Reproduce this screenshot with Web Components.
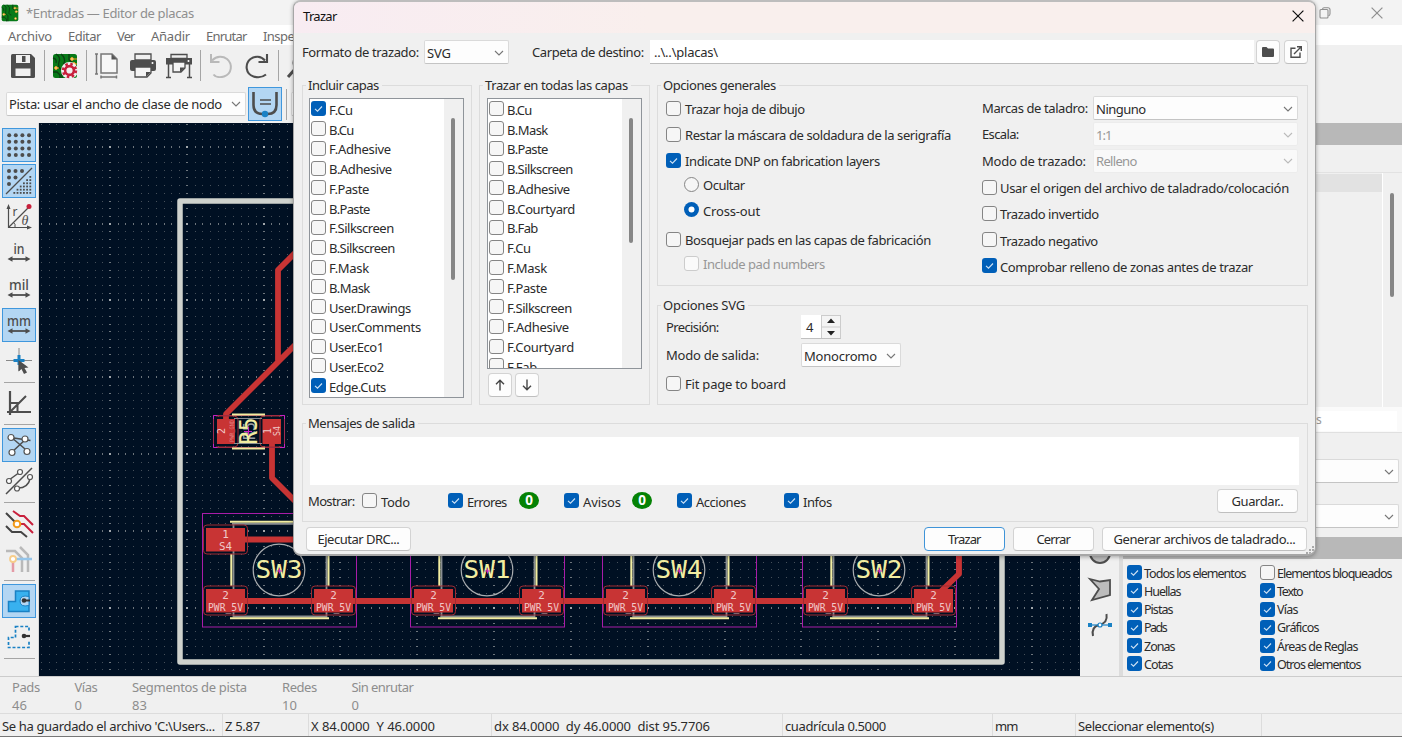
<!DOCTYPE html>
<html lang="es">
<head>
<meta charset="utf-8">
<title>Editor de placas</title>
<style>
html,body{margin:0;height:100%;overflow:hidden}
body{font:13px/16px "Noto Sans","Open Sans",sans-serif;color:#2b2b2b;background:#f0f0f0}
</style>
</head>
<body>
<pcb-app></pcb-app>
<script>
const pending = [];
const define = (name, css, html, setup) => customElements.define(name, class extends HTMLElement {
  constructor(){ super(); this.attachShadow({mode:'open'}); }
  connectedCallback(){
    if (this.ready) return; this.ready = true;
    const body = typeof html === 'function' ? html(this) : html;
    this.shadowRoot.innerHTML = `<style>*{box-sizing:border-box}${css}</style>${body}`;
    if (setup) setup(this, this.shadowRoot);
  }
});
const at = (el, n, d='') => el.hasAttribute(n) ? el.getAttribute(n) : d;

/* A text run tracked to a given advance width */
define('x-text', ':host{display:inline-block;white-space:pre;flex:none}span{white-space:pre}',
  '<span><slot></slot></span>', (el) => { if (at(el,'w')) { el.style.width = at(el,'w')+'px'; pending.push(el); } });
function fitTexts(){
  for (const el of pending){
    const s = el.shadowRoot.querySelector('span');
    const n = el.textContent.length;
    const m = s.getBoundingClientRect().width;
    if (n > 1) s.style.letterSpacing = ((+at(el,'w') - m) / (n - .5)).toFixed(3) + 'px';
  }
}
const T = (t, w) => `<x-text w="${w}">${t}</x-text>`;

/* ---------- icons ---------- */
const D = '#4d4d4d';
const board = `<rect x="1" y="1" width="24" height="24" rx="2.5" fill="#077a18"/><path d="M4 1q5 3 3 8t3 8v8M9 1q5 4 3 9t3 6M1 19h4l3 3v3M1 5q4 1 3 5M17 1v6l3 2" fill="none" stroke="#0a3f12" stroke-width="1.3"/><path d="M21 6h4M21 11h4M3 15h4" stroke="#f0a020" stroke-width="1"/><g fill="#f8e7b0" stroke="#f29b1d"><circle cx="20" cy="6" r="1.4"/><circle cx="22" cy="11" r="1.4"/><circle cx="4" cy="15" r="1.4"/><circle cx="21" cy="21" r="1.4"/></g>`;
const arrows = `<path d="M3 18h18" stroke="${D}" stroke-width="1.8"/><path d="M0.5 18l5-2.7v5.4zM23.5 18l-5-2.7v5.4z" fill="${D}"/>`;
const unit = (t,w) => `<text x="12" y="12.5" text-anchor="middle" textLength="${w}" lengthAdjust="spacingAndGlyphs" font-family="Noto Sans" font-size="14.5" font-weight="500" fill="${D}">${t}</text>${arrows}`;
let dots='', fine='';
for(let r=0;r<4;r++)for(let c=0;c<4;c++)dots+=`<circle cx="${2.2+c*6.6}" cy="${2.2+r*6.6}" r="2"/>`;
for(let r=0;r<6;r++)for(let c=0;c<8;c++)if(c+r>=7)fine+=`<rect x="${1+c*3.2}" y="${8+r*3.2}" width="1.8" height="1.8"/>`;
const ICONS = {
  board:[26,board],
  save:[24,`<path d="M0 1.5Q0 0 1.5 0H20l4 4v18.500q0 1.500-1.500 1.500h-21Q0 24 0 22.500z" fill="${D}"/><path d="M5 1h14v8H5z" fill="#f0f0f0"/><path d="M11 2h3.500v6H11z" fill="${D}"/><path d="M4.500 14.500h15V22h-15z" fill="#f0f0f0"/>`],
  setup:[26,board+`<circle cx="17.500" cy="17.500" r="8.500" fill="#f0f0f0"/><g stroke="#c8203c" fill="none"><circle cx="17.500" cy="17.500" r="4.400" stroke-width="2.600"/><circle cx="17.500" cy="17.500" r="6.400" stroke-width="2.600" stroke-dasharray="2.500 2.530"/></g>`],
  page:[26,`<g fill="none" stroke="#777" stroke-width="1.500"><path d="M7 1h11l5 5v14H7z" fill="#f7f7f7"/><path d="M2.500 1v20M1 1h3M1 21h3M7 24h15M7 22.500v3M22.500 22.500v3"/></g><path d="M17.500 1v5.500H23" fill="#555"/>`],
  print:[26,`<path d="M5 1h16v6H5z" fill="none" stroke="${D}" stroke-width="1.300"/><path d="M2 7h22q2 0 2 2v7q0 2-2 2H2q-2 0-2-2V9q0-2 2-2z" fill="${D}"/><circle cx="22.500" cy="10" r="1" fill="#fff"/><path d="M5 14h16v6l-4 4H5z" fill="#f4f4f4" stroke="${D}" stroke-width="1.300"/><path d="M21 19h-5v5z" fill="${D}"/>`],
  plot:[26,`<path d="M5 1.500h16v4H5z" fill="#f0f0f0" stroke="${D}" stroke-width="1.300"/><path d="M0 5h26v6.500H0z" fill="${D}"/><circle cx="22.500" cy="8" r="1" fill="#fff"/><path d="M2.500 11v13M23.500 11v13M0 24.500h5M21 24.500h5" stroke="${D}" stroke-width="1.500"/><path d="M7 9h12v6l-4 4H7z" fill="#f4f4f4" stroke="${D}" stroke-width="1.300"/><path d="M19 14.500h-5v5z" fill="${D}"/>`],
  undo:[24,`<path d="M3 6.500C8 1.500 14 2 18 5c6 5 5 15-3 17.500-5 1.500-9 0-10.500-2" fill="none" stroke="#b9b9b9" stroke-width="2"/><path d="M2 0v8h8.500" fill="none" stroke="#b9b9b9" stroke-width="2"/>`],
  redo:[24,`<path d="M20 6.500C16 1.500 9.500 2 5.500 5c-6 5-5 15 3 17.500 5 1.500 10 0 12.500-2" fill="none" stroke="${D}" stroke-width="2.100"/><path d="M22 0v8h-8.500" fill="none" stroke="${D}" stroke-width="2.100"/>`],
  find:[24,`<circle cx="14" cy="9" r="7.500" fill="none" stroke="${D}" stroke-width="2"/><path d="M8.500 14.500L1 23" stroke="${D}" stroke-width="3"/>`],
  auto:[26,`<path d="M1.500 1v13q0 9 9 9h5q9 0 9-9V1" fill="none" stroke="${D}" stroke-width="2.600"/><path d="M8 9h11M8 13h11" stroke="${D}" stroke-width="1.500"/><circle cx="13" cy="23" r="3.200" fill="#1a81c4"/>`],
  grid:[24,`<g fill="${D}">${dots}</g>`],
  gridover:[26,`<g fill="${D}"><circle cx="3" cy="3" r="2"/><circle cx="9.500" cy="3" r="2"/><circle cx="16" cy="3" r="2"/><circle cx="3" cy="9.500" r="2"/><circle cx="9.500" cy="9.500" r="2"/><circle cx="3" cy="16" r="2"/>${fine}</g><path d="M0 26L26 0" stroke="${D}" stroke-width="1.300"/>`],
  polar:[26,`<path d="M2.500 3v20.500H22M2.500 23.500L22 4" fill="none" stroke="${D}" stroke-width="1.200"/><path d="M2.500 0L4.500 5h-4zM26 23.500l-5 2v-4z" fill="${D}"/><circle cx="23" cy="2.500" r="2.500" fill="#c8203c"/><path d="M7 18q3 2 2 5" fill="none" stroke="${D}"/><text x="6.500" y="12" font-family="Noto Sans" font-size="12" fill="${D}">r</text><text x="15.500" y="20.500" font-family="Liberation Serif" font-style="italic" font-size="14" fill="${D}">θ</text>`],
  inch:[24,unit('in',11)], mil:[24,unit('mil',20)], mm:[24,unit('mm',24)],
  cursor:[26,`<path d="M0 12.500h26M13 0v23" stroke="#888" stroke-width="1"/><path d="M7.500 12.500h11M13 7v10" stroke="#1a81c4" stroke-width="3"/><path d="M12.500 12v11.500l3-2.500 2.500 5 3-1.500-2.500-4.500 4-.5z" fill="${D}"/>`],
  angle:[26,`<path d="M4 1v24M1 22h24" stroke="${D}" stroke-width="2.200"/><path d="M5 21L20 6M4 13h7.500v8" fill="none" stroke="${D}" stroke-width="2"/>`],
  rats:[26,`<path d="M4.500 5.500l20 3M20 7L5.500 20.500M5 5l17 14.500" stroke="${D}" stroke-width="1.500"/><g fill="#fff" stroke="#555" stroke-width="1.200"><circle cx="5" cy="5.500" r="3"/><circle cx="19" cy="7" r="3"/><circle cx="6" cy="20.500" r="3"/><circle cx="21" cy="19.500" r="3"/></g>`],
  curve:[26,`<path d="M0 26L26 0M3 12L14 4M12 20q10 0 12-9" fill="none" stroke="${D}" stroke-width="1.500"/><g fill="#fff" stroke="#555" stroke-width="1.200"><circle cx="3" cy="13" r="2.500"/><circle cx="14" cy="4" r="2.500"/><circle cx="11" cy="20.500" r="2.500"/><circle cx="24" cy="9" r="2.500"/></g>`],
  net:[28,`<g fill="none" stroke-width="2"><path d="M1 4l9 9M1 17l6 6h9l6 5" stroke="#444"/><path d="M8 2l7 5h4l9 9M13 15h6l9 9" stroke="#c8203c"/></g><circle cx="12" cy="15" r="3.300" fill="#fff" stroke="#f29b1d" stroke-width="2"/>`],
  via:[26,`<g fill="none" stroke-width="2.500"><path d="M0 5h9l7 7v14M14 1l8 8v17" stroke="#b9b9b9"/><path d="M7 16v10" stroke="#e49aa6"/><path d="M9 13h17" stroke="#95c5ea"/></g><circle cx="7" cy="13" r="3" fill="#fff" stroke="#f6cd8b" stroke-width="1.800"/>`],
  zone:[24,`<path d="M8.500 2H22v20.500H1.500V12.500h7z" fill="#38b1ef" stroke="#1a81c4" stroke-width="1.500"/><path d="M22 7.500q-9-2-9 4.500t9 4.500z" fill="#b3d6f3" stroke="#1a81c4"/><circle cx="17" cy="11.500" r="2.300" fill="#333"/><path d="M17 11.500h6" stroke="#333" stroke-width="2"/>`],
  zoneline:[24,`<path d="M8.500 1.500H22v21H1.500V12.500h7z" fill="none" stroke="#1a81c4" stroke-width="1.700" stroke-dasharray="3 1.800"/><path d="M20 6.500h4v9h-4z" fill="#f0f0f0"/><circle cx="17" cy="11" r="2.300" fill="#333"/><path d="M17 11h6" stroke="#333" stroke-width="2.200"/>`],
  circle:[26,`<circle cx="13" cy="13" r="10" fill="#bcbcbc" stroke="${D}" stroke-width="2"/>`],
  poly:[24,`<path d="M2 2l10 2.500 10-1.500v15L4 23l7-11z" fill="#bcbcbc" stroke="${D}" stroke-width="1.800"/>`],
  bezier:[24,`<path d="M5 23q-2-9 6-11 9-2 7.500-11" fill="none" stroke="${D}" stroke-width="2"/><path d="M2 12h20" stroke="#1a81c4" stroke-width="1.200"/><path d="M0 10h4v4H0zM20 10h4v4h-4z" fill="#1a81c4"/><circle cx="12" cy="12" r="2" fill="#fff" stroke="#1a81c4" stroke-width="1.200"/>`],
  close:[12,`<path d="M.6.6l10.800 10.800M11.400.6L.6 11.400" stroke="currentColor" stroke-width="1.200"/>`],
  restore:[12,`<path d="M1 3.500q0-1 1-1h6q1 0 1 1V10q0 1-1 1H2q-1 0-1-1zM3.500 2.200Q3.800.8 5 .8h4q2 0 2 2v4q0 1.500-1.200 1.900" fill="none" stroke="currentColor" stroke-width="1.100"/>`],
  chev:[10,`<path d="M1 3l4 4 4-4" fill="none" stroke="currentColor" stroke-width="1.100"/>`],
  folder:[12,`<path d="M0 2q0-1 1-1h3.500L6 2.500h5q1 0 1 1V10q0 1-1 1H1q-1 0-1-1z" fill="${D}"/>`],
  open:[12,`<path d="M5.500 2.200H1v9h9V6.500" fill="none" stroke="${D}" stroke-width="1.400"/><path d="M4 8l7-7M7 .8h4.300V5" fill="none" stroke="${D}" stroke-width="1.400"/>`],
  up:[12,`<path d="M6 1v10.500M2 5.200l4-4 4 4" fill="none" stroke="#444" stroke-width="1.400"/>`],
  down:[12,`<path d="M6 .5V11M2 6.800l4 4 4-4" fill="none" stroke="#444" stroke-width="1.400"/>`]
};
define('x-icon', ':host{display:block;flex:none}svg{display:block;overflow:visible}', el => {
  const [v,s] = ICONS[at(el,'name')], z = at(el,'size') || v;
  return `<svg width="${z}" height="${z}" viewBox="0 0 ${v} ${v}">${s}</svg>`;
});
const I = (n,s) => `<x-icon name="${n}"${s?` size="${s}"`:''}></x-icon>`;

/* ---------- controls ---------- */
define('tool-button', `:host{display:flex;width:36px;height:36px;flex:none;align-items:center;justify-content:center}
 div{width:34px;height:34px;display:flex;align-items:center;justify-content:center}
 :host([on]) div{background:#b3d6f3;border:1px solid #3f97dd}`, el => `<div>${I(at(el,'name'),at(el,'size'))}</div>`);
define('ui-check', `:host{display:flex;align-items:center;flex:none;height:18px}
 i{width:15px;height:15px;border:1px solid #858585;border-radius:3px;background:#f6f6f6;flex:none;margin-right:var(--gap,4px)}
 svg{width:15px;height:15px;flex:none;margin-right:var(--gap,4px)}
 :host([disabled]){color:#979797}:host([disabled]) i{border-color:#ccc;background:#fafafa}
 x-text{position:relative;top:1px}
 :host([radio]) i{border-radius:50%}`, el => {
  let b = '<i></i>';
  if (el.hasAttribute('checked')) b = el.hasAttribute('radio')
    ? '<svg viewBox="0 0 15 15"><circle cx="7.500" cy="7.500" r="7.500" fill="#005fb8"/><circle cx="7.500" cy="7.500" r="3" fill="#fff"/></svg>'
    : '<svg viewBox="0 0 15 15"><rect width="15" height="15" rx="3" fill="#005fb8"/><path d="M4 7.800l2.500 2.400L11 5.500" fill="none" stroke="#cfe3f5" stroke-width="1.100"/></svg>';
  return b + T(at(el,'label'), at(el,'w'));
});
const C = (l,w,x='') => `<ui-check label="${l}" w="${w}" ${x}></ui-check>`;
define('ui-combo', `:host{display:flex;align-items:center;justify-content:space-between;height:24px;background:#fdfdfd;border:1px solid #dadada;border-bottom-color:#c4c4c4;border-radius:2px;padding:1px 4px 0 2px;flex:none;box-sizing:border-box}
 x-icon{color:#777}:host([disabled]){color:#979797;background:#f9f9f9;border-color:#ececec}:host([disabled]) x-icon{color:#bbb}`,
 el => (at(el,'label') ? T(at(el,'label'),at(el,'w')) : '<span></span>') + I('chev'));
define('ui-button', `:host{display:flex;align-items:center;justify-content:center;height:24px;background:#fdfdfd;border:1px solid #d3d3d3;border-bottom-color:#bfbfbf;border-radius:4px;flex:none;box-sizing:border-box}
 :host([primary]){border-color:#3f94d8}`, '<slot></slot>');
define('ui-group', `:host{display:block;position:relative;border:1px solid #dcdcdc;box-sizing:border-box;flex:none}
 .legend{position:absolute;left:3px;top:-9px;padding:0 3px 0 2px;background:#f0f0f0}`,
 el => `<div class="legend">${T(at(el,'label'),at(el,'w'))}</div><slot></slot>`);
define('layer-list', `:host{display:block;border:1px solid #8f949a;background:#fff;box-sizing:border-box;overflow:hidden}
 .in{display:flex;height:100%}.rows{flex:1;overflow:hidden}.rows ui-check{height:19.77px;margin-left:1px;--gap:3px}
 .bar{width:19px;background:#f0f0f0;padding:19px 0 0 7px}.bar i{display:block;width:4px;border-radius:2px;background:#868686}`,
 el => `<div class="in"><div class="rows">${JSON.parse(at(el,'items')).map(([l,w,c])=>C(l,w,c?'checked':'')).join('')}</div><div class="bar"><i style="height:${at(el,'thumb')}px"></i></div></div>`);
define('count-badge', `:host{display:flex;width:20px;height:17px;border-radius:50%;background:#058205;color:#fff;font:bold 13.5px/17px "Noto Sans",sans-serif;align-items:center;justify-content:center;flex:none}`, '<slot></slot>');

/* ---------- dialog ---------- */
const L1 = [['F.Cu',24,1],['B.Cu',25],['F.Adhesive',62],['B.Adhesive',63],['F.Paste',40],['B.Paste',41],['F.Silkscreen',65],['B.Silkscreen',66],['F.Mask',40],['B.Mask',41],['User.Drawings',82],['User.Comments',92],['User.Eco1',55],['User.Eco2',55],['Edge.Cuts',57,1]];
const L2 = [['B.Cu',25],['B.Mask',41],['B.Paste',41],['B.Silkscreen',66],['B.Adhesive',63],['B.Courtyard',68],['B.Fab',31],['F.Cu',24],['F.Mask',40],['F.Paste',40],['F.Silkscreen',65],['F.Adhesive',62],['F.Courtyard',67],['F.Fab',30]];
define('plot-dialog', `:host{position:absolute;left:293px;top:0;width:1023px;height:556px;display:flex;flex-direction:column;background:#f0f0f0;border:1px solid #a6a6a6;border-top:2px solid #bdbdbd;border-bottom-width:2px;border-radius:8px;box-sizing:border-box;overflow:hidden;box-shadow:0 1px 4px #0005}
 .title{height:31px;flex:none;background:linear-gradient(90deg,#f8ecf2,#f9efed 35%);display:flex;align-items:center;justify-content:space-between;padding:0 11px 3px 9px;color:#111}
 .path{height:48px;display:flex;align-items:center;flex:none;padding:0 0 10px 8px}
 .path ui-combo{width:85px;margin:0 23px 0 5px}
 .field{width:604px;height:24px;background:#fff;border-bottom:1.500px solid #bcbcbc;margin:0 2px 0 6px;padding:4px;flex:none}
 .path ui-button{width:24px}.path ui-button+ui-button{margin-left:4px}
 .main{display:flex;height:320px;margin:4px 0 0 8px;flex:none;gap:7px}
 .main>ui-group{height:320px}
 .g1{width:170px;padding:12px 0 0 6px}.g2{width:171px;padding:12px 0 0 7px}
 layer-list{width:155px}
 .g1 layer-list{height:300px}.g2 layer-list{height:271px}
 .mv{display:flex;gap:3px;margin:4px 0 0 1px}.mv ui-button{width:24px}
 .right{width:651px;display:flex;flex-direction:column;justify-content:space-between}
 .gen{height:199px;display:flex}.gen>div{padding-top:9px}
 .left{width:316px;padding-left:8px}.left ui-check{height:26px}
 .left .r1{height:22px;margin-left:18px}.left .r2{height:29px;margin-left:18px}.left .p{height:30px}.left .ip{height:18px;margin-left:18px}
 .opts{padding-left:8px;display:flex;flex-direction:column}.opts>*{height:26.300px;flex:none}
 .opts ui-check{--gap:3px}
 .kv{display:flex;align-items:center;justify-content:space-between;width:316px}.kv ui-combo{width:205px}
 .svg{height:98px;padding:9px 0 0 8px}
 .row{display:flex;align-items:center;height:24px}.row .k{width:135px}.row+.row{margin-top:4px}
 .row ui-combo{width:100px}
 .spin{width:40px;height:24px;display:flex;background:#fff;border-bottom:1.500px solid #c0c0c0;border-right:1px solid #ccc}
 .spin b{font-weight:400;width:20px;padding:4px 0 0 5px;display:block}.spin div{width:19px;border-left:1px solid #ccc;border-top:1px solid #ccc;background:#f4f4f4}
 .spin svg{display:block}
 .msg{height:99px;width:1006px;margin:18px 0 0 8px;padding:13px 0 0 7px}
 .area{height:48px;width:989px;background:#fff}
 .show{display:flex;align-items:center;height:31px;margin-left:-2px}
 .show ui-check{--gap:4px}
 .foot{display:flex;align-items:center;margin:4px 0 0 12px;height:25px}
 .grip{position:absolute;right:1px;bottom:0}`,
`<div class="title">${T('Trazar',34)}${I('close')}</div>
<div class="path">${T('Formato de trazado:',117)}<ui-combo label="SVG" w="24"></ui-combo>${T('Carpeta de destino:',112)}<div class="field">${T('..\\..\\placas\\',64)}</div><ui-button>${I('folder')}</ui-button><ui-button>${I('open')}</ui-button></div>
<div class="main">
 <ui-group class="g1" label="Incluir capas" w="71"><layer-list thumb="162" items='${JSON.stringify(L1)}'></layer-list></ui-group>
 <ui-group class="g2" label="Trazar en todas las capas" w="143"><layer-list thumb="125" items='${JSON.stringify(L2)}'></layer-list><div class="mv"><ui-button>${I('up')}</ui-button><ui-button>${I('down')}</ui-button></div></ui-group>
 <div class="right">
  <ui-group label="Opciones generales" w="113"><div class="gen">
   <div class="left">${C('Trazar hoja de dibujo',120)}${C('Restar la máscara de soldadura de la serigrafía',266)}${C('Indicate DNP on fabrication layers',195,'checked')}${C('Ocultar',42,'radio class="r1"')}${C('Cross-out',57,'radio checked class="r2"')}${C('Bosquejar pads en las capas de fabricación',246,'class="p"')}${C('Include pad numbers',122,'disabled class="ip"')}</div>
   <div class="opts"><div class="kv">${T('Marcas de taladro:',106)}<ui-combo label="Ninguno" w="50"></ui-combo></div><div class="kv">${T('Escala:',37)}<ui-combo label="1:1" w="16" disabled></ui-combo></div><div class="kv">${T('Modo de trazado:',104)}<ui-combo label="Relleno" w="41" disabled></ui-combo></div>${C('Usar el origen del archivo de taladrado/colocación',289)}${C('Trazado invertido',99)}${C('Trazado negativo',98)}${C('Comprobar relleno de zonas antes de trazar',253,'checked')}</div>
  </div></ui-group>
  <ui-group label="Opciones SVG" w="82"><div class="svg">
   <div class="row"><div class="k">${T('Precisión:',53)}</div><div class="spin"><b>4</b><div><svg width="18" height="22"><path d="M5 7l4-4.500L13 7zM5 15l4 4.500L13 15z" fill="#222"/><path d="M0 11h18" stroke="#ccc"/></svg></div></div></div>
   <div class="row"><div class="k">${T('Modo de salida:',93)}</div><ui-combo label="Monocromo" w="73"></ui-combo></div>
   <div class="row">${C('Fit page to board',101)}</div>
  </div></ui-group>
 </div>
</div>
<ui-group class="msg" label="Mensajes de salida" w="107"><div class="area"></div>
 <div class="show">${T('Mostrar:',47)}<span style="width:7px"></span>${C('Todo',29)}<span style="width:38px"></span>${C('Errores',40,'checked')}<span style="width:12px"></span><count-badge>0</count-badge><span style="width:25px"></span>${C('Avisos',38,'checked')}<span style="width:11px"></span><count-badge>0</count-badge><span style="width:25px"></span>${C('Acciones',50,'checked')}<span style="width:38px"></span>${C('Infos',29,'checked')}<ui-button style="width:81px;margin-left:385px">${T('Guardar..',52)}</ui-button></div></ui-group>
<div class="foot"><ui-button style="width:105px">${T('Ejecutar DRC...',82)}</ui-button><ui-button primary style="width:81px;margin-left:513px">${T('Trazar',33)}</ui-button><ui-button style="width:81px;margin-left:8px">${T('Cerrar',34)}</ui-button><ui-button style="width:205px;margin-left:8px">${T('Generar archivos de taladrado...',182)}</ui-button></div>
<svg class="grip" width="9" height="9"><path d="M7 1h2v2H7zM4 4h2v2H4zM7 4h2v2H7zM1 7h2v2H1zM4 7h2v2H4zM7 7h2v2H7z" fill="#a9a9a9"/></svg>`);

/* ---------- board canvas, in window coordinates ---------- */
function boardSvg(){
  let minor='', mid='', major='';
  for(let i=-9;i<=127;i++){ const x=Math.round(110+i*7.683);
    for(let j=-3;j<=69;j++){ const y=Math.round(146.700+j*7.687); if(y<124||y>675||x<40)continue;
      const a=i%10===0,b=j%10===0;
      if(a&&b) major+=`M${x-1} ${y-1}h2v2h-2z`; else if(a) mid+=`M${x-1} ${y}h2v1h-2z`; else if(b) mid+=`M${x} ${y-1}h1v2h-1z`; else minor+=`M${x} ${y}h1v1h-1z`; } }
  const txt=(t,x,y,s,w,f='#f0c8c8')=>`<text x="${x}" y="${y}" font-size="${s}" text-anchor="middle" ${w?`textLength="${w}" lengthAdjust="spacingAndGlyphs"`:''} fill="${f}">${t}</text>`;
  const pad=(x,y,a,b,w)=>`<rect x="${x-2.500}" y="${y-3}" width="44" height="29" rx="3.500" fill="none" stroke="#a02a32"/><rect x="${x}" y="${y}" width="39" height="23.500" fill="#c83434"/>${txt(a,x+19.500,y+10,11)}${txt(b,x+19.500,y+22,10.500,w)}`;
  const sw=(x,n)=>`<rect x="${x+.5}" y="513.500" width="154" height="113.500" fill="none" stroke="#a81ca8"/>
   <path d="M${x+30} 523.800h96M${x+31.500} 524v92.500h93V524" fill="none" stroke="#8a8f92" stroke-width="1.800"/>
   <path d="M${x+28} 521.800h98M${x+28} 618.200h99M${x+29.300} 554v32M${x+126.500} 540v46" stroke="#f2eda1" stroke-width="2"/>
   <circle cx="${x+77}" cy="570" r="25.800" fill="none" stroke="#a9adb0" stroke-width="1.200"/>
   ${txt(n,x+77,578,24.500,47,'#f2eda1')}<path d="M${x+75} 571h5M${x+77.500} 568.500v5" stroke="#c522c5"/>`;
  const pads=(x,first)=>(first?pad(x+4,528,'1','S4',13):'')+pad(x+4,589,'2','PWR_5V',35)+pad(x+112,589,'2','PWR_5V',35);
  const xs=[[202,'SW3'],[410,'SW1'],[602,'SW4'],[802,'SW2']];
  return `<svg viewBox="39 123 1041 553" width="1041" height="553" font-family="DejaVu Sans Mono,monospace">
  <path d="${minor}" fill="#46505a"/><path d="${mid}" fill="#6d757c"/><path d="${major}" fill="#a3a8ac"/>
  <rect x="180" y="201" width="822" height="461" fill="none" stroke="#cfd2cd" stroke-width="5.500" stroke-linejoin="round"/>
  ${xs.map(([x,n])=>sw(x,n)).join('')}
  <g fill="none" stroke="#c83434" stroke-width="5.800" stroke-linejoin="round" stroke-linecap="round"><path d="M300 248L278 270V360M300 340L226 414V425M272 440V478L300 506M240 539.500H330M240 601H940M935 597L959 574V540"/></g>
  ${xs.map(([x],i)=>pads(x,i===0)).join('')}
  <path d="M236 416.500h30v28h-30z" fill="#001023" opacity=".6"/>
  <path d="M213.500 415.500h71v32h-71z" fill="none" stroke="#a02a50"/><path d="M216 416h18q4 0 4 4v23q0 4-4 4h-18M282 416h-18q-4 0-4 4v23q0 4 4 4h18" fill="none" stroke="#a02a32"/>
  <path d="M213.500 419v-3.500h4M280 415.500h4.500v3.500M213.500 444v3.500h4M280 447.500h4.500v-3.500" fill="none" stroke="#c522c5"/>
  <path d="M217 419h18v25h-18zM262.500 419h18.500v25h-18.500z" fill="#c83434"/>
  <path d="M232 414.500h33M232 448.500h33" stroke="#f2eda1" stroke-width="2"/>
  <path d="M234 418.500h28M234 443.500h28" stroke="#8a8f92"/>
  <g transform="rotate(-90 248 431)">${txt('R5',248,438,16,18,'#9aa0a5')}${txt('R5',248,440,24.500,27,'#f2eda1')}</g>
  <path d="M244 431.500h8M248.500 427v8" stroke="#c522c5"/>
  <g transform="rotate(-90 225 431)">${txt('2',225,431,10)}${txt('PWR_GND',225,440,6,22,'#e08080')}</g>
  <g transform="rotate(-90 270 431)">${txt('1',270,432,10)}${txt('S4',270,441,9.500,10)}</g>
  </svg>`;
}
define('board-canvas', ':host{display:block;width:1041px;height:553px;background:#001023;flex:none}svg{display:block}', boardSvg);

/* ---------- application frame ---------- */
define('left-toolbar', `:host{display:flex;flex-direction:column;width:39px;flex:none;padding:4px 0 0 1px;box-sizing:border-box;border-right:1px solid #d8d8d8}
 hr{border:0;height:1px;width:31px;background:#a5a5a5;margin:2.500px 0 2.500px 3px;flex:none}`,
 ['grid*','gridover*','polar','inch','mil','mm*','cursor','-','angle','-','rats*','curve','-','net','via','-','zone*','zoneline','-'].map(n=>n==='-'?'<hr>':`<tool-button name="${n.replace('*','')}" ${n.endsWith('*')?'on':''}></tool-button>`).join(''));
define('top-toolbar', `:host{display:block;height:78px;flex:none}
 .a{display:flex;align-items:center;height:41px;padding-left:5px}.b{display:flex;align-items:center;height:36px;padding-left:6px}
 hr{border:0;width:1px;height:31px;background:#a5a5a5;margin:0 2.500px;flex:none}
 .b hr{margin:0 4px 0 3px}.b ui-combo{width:240px;margin-right:1px;padding-top:0}
 .b ui-combo.w{width:120px}`,
 `<div class="a">${['save','-','setup','-','page','print','plot','-','undo','redo','-','find'].map(n=>n==='-'?'<hr>':`<tool-button name="${n}"></tool-button>`).join('')}</div>
 <div class="b"><ui-combo label="Pista: usar el ancho de clase de nodo" w="213"></ui-combo><tool-button on name="auto"></tool-button><hr><ui-combo class="w"></ui-combo></div>`);
define('side-panel', `:host{display:flex;flex-direction:column;flex:1;min-width:0}
 .h{height:22px;background:#b8b8b8;flex:none}.cols{height:28px;border-bottom:1px solid #e2e2e2;flex:none}
 .tree{height:234px;display:flex;flex:none}.tree .t{width:260px;border-right:1px solid #fff}.tree .t div{height:18px;margin-top:1px;background:#e2e2e2}
 .tree i{width:4px;height:104px;background:#868686;border-radius:2px;margin:20px 0 0 7px}
 .search{height:26px;background:#fafafa;border-bottom:1px solid #e0e0e0;flex:none;padding:4px 5px 0 90px}
 .search div{height:20px;background:#fff;color:#999;padding:1px 0 0 103px;font-size:12px}
 ui-combo{margin:0 3px 0 20px}
 .f{display:grid;grid-template-columns:133px 1fr;grid-auto-rows:18.250px;padding:4.500px 0 0 3.500px}
 .f ui-check{--gap:2.500px;font-size:12.500px}`,
 `<div class="h"></div><div class="cols"></div><div class="tree"><div class="t"><div></div></div><i></i></div>
 <div class="search"><div>s</div></div>
 <ui-combo style="margin-top:26px"></ui-combo><ui-combo style="margin-top:21px"></ui-combo>
 <div class="h" style="margin-top:9px"></div>
 <div class="f">${C('Todos los elementos',102,'checked')}${C('Elementos bloqueados',115)}${C('Huellas',37,'checked')}${C('Texto',26,'checked')}${C('Pistas',29,'checked')}${C('Vías',21,'checked')}${C('Pads',23,'checked')}${C('Gráficos',42,'checked')}${C('Zonas',31,'checked')}${C('Áreas de Reglas',81,'checked')}${C('Cotas',29,'checked')}${C('Otros elementos',84,'checked')}</div>`);
define('status-area', `:host{display:block;flex:none}
 .info{display:grid;grid-template-columns:62.500px 57.500px 150px 69.500px 1fr;height:37px;padding:2px 0 0 12px;color:#8d8d8d;row-gap:2px;grid-auto-rows:16px;border-top:1px solid #ccc;margin-top:0}
 .bar{display:flex;height:23px;border-top:1px solid #dcdcdc}.bar div{border-right:1px solid #dcdcdc;padding:4px 0 0 2px;flex:none}
 .end{height:1px;background:#777}`,
 `<div class="info">${T('Pads',28)}${T('Vías',23)}${T('Segmentos de pista',115)}${T('Redes',35)}${T('Sin enrutar',62)}<span>46</span><span>0</span><span>83</span><span>10</span><span>0</span></div>
 <div class="bar">${[[223,"Se ha guardado el archivo 'C:\\Users...",213],[86,'Z 5.87',35],[183,'X 84.0000  Y 46.0000',124],[291,'dx 84.0000  dy 46.0000  dist 95.7706',216],[210,'cuadrícula 0.5000',101],[83,'mm',23],[186,'Seleccionar elemento(s)',136]].map(([w,t,n])=>`<div style="width:${w}px">${T(t,n)}</div>`).join('')}</div><div class="end"></div>`);
define('pcb-app', `:host{display:flex;flex-direction:column;width:1402px;height:737px;position:relative;overflow:hidden;background:#f0f0f0}
 .title{display:flex;align-items:center;height:25px;background:#f3f3f3;color:#8f8f8f;padding-left:1px;flex:none}
 .title x-text{margin-left:7px;margin-right:1125px}
 .title x-icon+x-icon{margin-left:40px}
 .menu{display:flex;height:20px;background:#fff;color:#6c6c6c;gap:16px;padding:3px 0 0 8px;flex:none}
 .body{display:flex;height:553px;flex:none}
 .tools{width:39px;flex:none;display:flex;flex-direction:column;justify-content:flex-end;padding:0 0 33px 2px}
 .split{width:4px;background:#dcdcdc;flex:none}`,
 `<div class="title">${I('board',18)}${T('*Entradas — Editor de placas',168)}${I('restore')}${I('close')}</div>
 <div class="menu">${T('Archivo',44)}${T('Editar',33)}${T('Ver',18)}${T('Añadir',39)}${T('Enrutar',41)}${T('Inspeccionar',72)}</div>
 <top-toolbar></top-toolbar>
 <div class="body"><left-toolbar></left-toolbar><board-canvas></board-canvas><div class="tools"><tool-button name="circle"></tool-button><tool-button name="poly"></tool-button><tool-button name="bezier"></tool-button></div><div class="split"></div><side-panel></side-panel></div>
 <status-area></status-area>
 <plot-dialog></plot-dialog>`);
fitTexts();
</script>
</body>
</html>
